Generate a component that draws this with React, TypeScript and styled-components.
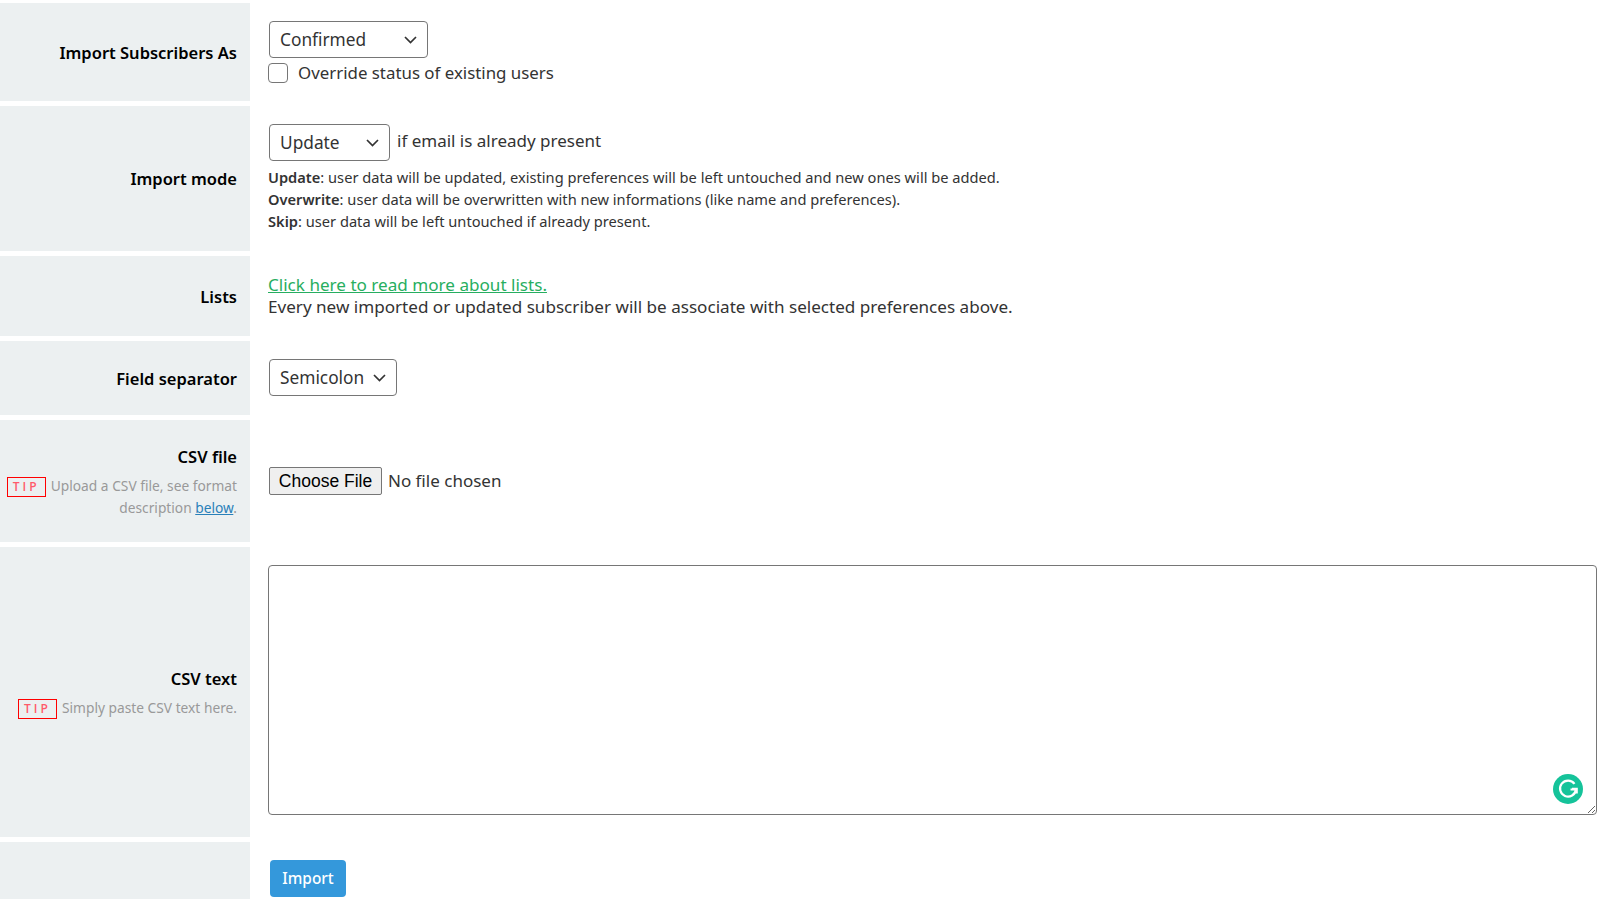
import React from "react";
import styled, { createGlobalStyle } from "styled-components";

const Global = createGlobalStyle`
  html, body { margin: 0; padding: 0; background: #fff; height: 899px; overflow: hidden; }
  body { font-family: "Noto Sans", "Open Sans", sans-serif; font-size: 16px; line-height: 22px; color: #333; }
`;

const Form = styled.form`
  display: flex;
  flex-direction: column;
  gap: 5px;
  padding-top: 3px;
  height: 896px;
  overflow: hidden;
`;

const Row = styled.div<{ $h: number }>`
  display: grid;
  grid-template-columns: 250px 1fr;
  height: ${(p) => p.$h}px;
  flex: none;
`;

const Label = styled.div`
  background: #ecf0f1;
  padding: 1px 13px 0 6px;
  display: flex;
  flex-direction: column;
  justify-content: center;
  text-align: right;
`;

const TipLabel = styled(Label)`
  padding-top: 3px;
`;

const LabelTitle = styled.div`
  font-weight: 600;
  color: #000;
  font-size: 16.5px;
  line-height: 22px;
`;

const Tip = styled.div`
  margin-top: 7px;
  font-size: 13.75px;
  line-height: 22px;
  color: #999;
  a { color: #2980b9; }
`;

const TipBadge = styled.span`
  display: inline-block;
  box-sizing: border-box;
  width: 39px;
  border: 1px solid #f00;
  color: #ff5a6a;
  font-family: "Open Sans", sans-serif;
  font-size: 12px;
  font-weight: 600;
  line-height: 18px;
  letter-spacing: 3px;
  text-align: center;
  margin-right: 5px;
  vertical-align: middle;
`;

const Content = styled.div`
  padding-left: 18px;
  padding-right: 13px;
  display: flex;
  flex-direction: column;
  justify-content: center;
  position: relative;
`;

const Inline = styled.div`
  display: flex;
  align-items: center;
  gap: 7px;
  margin-top: -2px;
`;

const SelectWrap = styled.span<{ $w: number; $up?: boolean }>`
  position: relative;
  display: block;
  flex: none;
  width: ${(p) => p.$w}px;
  height: 37px;
  margin-left: 1px;
  margin-top: ${(p) => (p.$up ? -2 : 0)}px;
`;

const Select = styled.select`
  display: block;
  appearance: none;
  box-sizing: border-box;
  width: 100%;
  height: 100%;
  padding: 2px 10px 0;
  border: 1px solid #767676;
  border-radius: 4px;
  background-color: #fff;
  color: #333;
  font: inherit;
  font-size: 17.3px;
`;

const Chevron = styled.svg`
  position: absolute;
  right: 10px;
  top: 11px;
  width: 15px;
  height: 15px;
  pointer-events: none;
`;

const CheckRow = styled.label`
  display: flex;
  align-items: center;
  gap: 10px;
  font-size: 16.87px;
  margin-top: 4px;
`;

const Check = styled.input`
  appearance: none;
  width: 20px;
  height: 20px;
  margin: 0;
  border: 1px solid #767676;
  border-radius: 4px;
  background: #fff;
`;

const Help = styled.div`
  font-size: 14.65px;
  line-height: 22px;
  margin-top: 5px;
  strong { font-weight: 600; }
`;

const Plain = styled.span`
  font-size: 17px;
  position: relative;
  top: -1px;
`;

const TextBlock = styled.div`
  padding-top: 0;
`;

const TextLine = styled.div`
  font-size: 17.1px;
  line-height: 22px;
`;

const GreenLink = styled.a`
  color: #27ae60;
  text-decoration: underline;
`;

const FileInput = styled.input`
  margin-left: 1px;
  font-family: "Noto Sans", sans-serif;
  font-size: 17px;
  color: #333;
  &::file-selector-button {
    font-family: "Liberation Sans", sans-serif;
    font-size: 17.5px;
    height: 28px;
    width: 113px;
    margin-right: 6px;
    border: 1px solid #767676;
    border-radius: 2px;
    background: #efefef;
    color: #000;
    padding: 0;
  }
`;

const TextArea = styled.textarea`
  display: block;
  box-sizing: border-box;
  width: 1329px;
  height: 250px;
  border: 1px solid #767676;
  border-radius: 4px;
  background: #fff;
  margin: -4px 0 0;
  font: inherit;
`;

const GrammarlyBadge = styled.svg`
  position: absolute;
  right: 27px;
  top: 227px;
  width: 30px;
  height: 30px;
`;

const ImportButton = styled.button`
  width: 76px;
  height: 37px;
  margin-left: 2px;
  margin-top: 18px;
  padding: 0;
  border: 0;
  border-radius: 4px;
  background: #3498db;
  color: #fff;
  font: inherit;
  font-size: 15.4px;
  font-weight: 500;
`;

const ButtonCell = styled(Content)`
  justify-content: flex-start;
`;

const Arrow = () => (
  <Chevron viewBox="0 0 15 15">
    <path d="M2 5l5.5 5.5L13 5" fill="none" stroke="#333" strokeWidth="1.7" />
  </Chevron>
);

export default function App() {
  return (
    <>
      <Global />
      <Form onSubmit={(e) => e.preventDefault()}>
        <Row $h={98}>
          <Label><LabelTitle>Import Subscribers As</LabelTitle></Label>
          <Content>
            <SelectWrap $w={159}>
              <Select defaultValue="Confirmed">
                <option>Confirmed</option>
                <option>Unconfirmed</option>
              </Select>
              <Arrow />
            </SelectWrap>
            <CheckRow>
              <Check type="checkbox" />
              Override status of existing users
            </CheckRow>
          </Content>
        </Row>
        <Row $h={145}>
          <Label><LabelTitle>Import mode</LabelTitle></Label>
          <Content>
            <Inline>
              <SelectWrap $w={121}>
                <Select defaultValue="Update">
                  <option>Update</option>
                  <option>Overwrite</option>
                  <option>Skip</option>
                </Select>
                <Arrow />
              </SelectWrap>
              <Plain>if email is already present</Plain>
            </Inline>
            <Help>
              <div><strong>Update</strong>: user data will be updated, existing preferences will be left untouched and new ones will be added.</div>
              <div><strong>Overwrite</strong>: user data will be overwritten with new informations (like name and preferences).</div>
              <div><strong>Skip</strong>: user data will be left untouched if already present.</div>
            </Help>
          </Content>
        </Row>
        <Row $h={80}>
          <Label><LabelTitle>Lists</LabelTitle></Label>
          <Content>
            <TextBlock>
              <TextLine><GreenLink href="#">Click here to read more about lists.</GreenLink></TextLine>
              <TextLine>Every new imported or updated subscriber will be associate with selected preferences above.</TextLine>
            </TextBlock>
          </Content>
        </Row>
        <Row $h={74}>
          <Label><LabelTitle>Field separator</LabelTitle></Label>
          <Content>
            <SelectWrap $w={128} $up>
              <Select defaultValue="Semicolon">
                <option>Semicolon</option>
                <option>Comma</option>
              </Select>
              <Arrow />
            </SelectWrap>
          </Content>
        </Row>
        <Row $h={122}>
          <TipLabel>
            <LabelTitle>CSV file</LabelTitle>
            <Tip><TipBadge>TIP</TipBadge>Upload a CSV file, see format description <a href="#">below</a>.</Tip>
          </TipLabel>
          <Content>
            <FileInput type="file" />
          </Content>
        </Row>
        <Row $h={290}>
          <TipLabel>
            <LabelTitle>CSV text</LabelTitle>
            <Tip><TipBadge>TIP</TipBadge>Simply paste CSV text here.</Tip>
          </TipLabel>
          <Content>
            <TextArea />
            <GrammarlyBadge viewBox="0 0 30 30">
              <circle cx="15" cy="15" r="15" fill="#15c39a" />
              <path d="M21.5 9.8A8 8 0 1 0 23 15.5h-5.5" fill="none" stroke="#fff" strokeWidth="2.2" />
              <path d="M23.8 19.5v-4.8h-4.8" fill="none" stroke="#fff" strokeWidth="2" />
            </GrammarlyBadge>
          </Content>
        </Row>
        <Row $h={60}>
          <Label />
          <ButtonCell>
            <ImportButton type="submit">Import</ImportButton>
          </ButtonCell>
        </Row>
      </Form>
    </>
  );
}
